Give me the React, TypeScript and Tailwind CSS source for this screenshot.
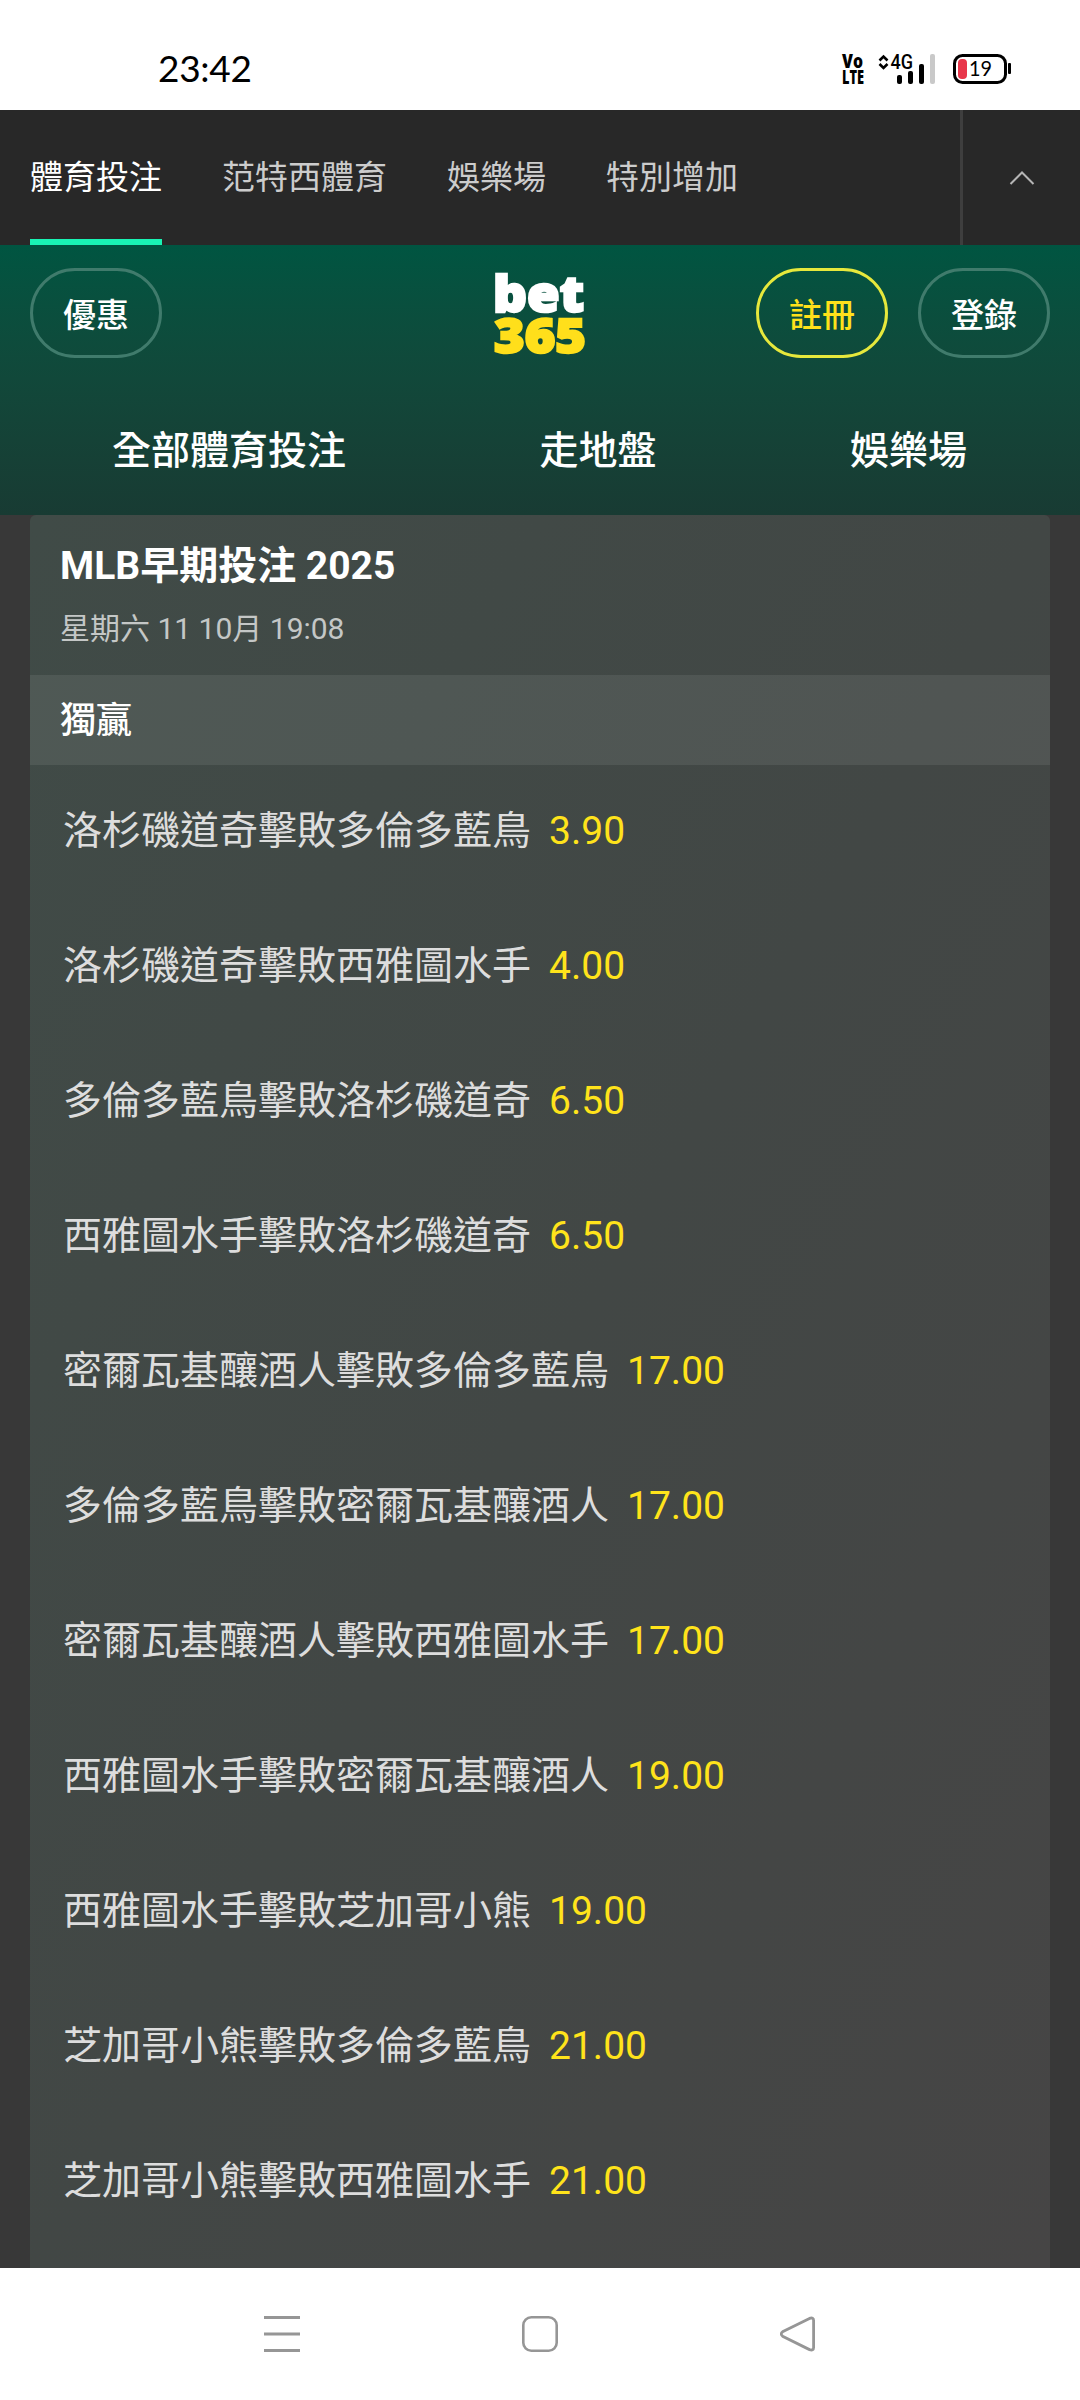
const tabs = ["體育投注", "范特西體育", "娛樂場", "特別增加"];

const sections = ["全部體育投注", "走地盤", "娛樂場"];

const selections = [
  { name: "洛杉磯道奇擊敗多倫多藍鳥", odds: "3.90" },
  { name: "洛杉磯道奇擊敗西雅圖水手", odds: "4.00" },
  { name: "多倫多藍鳥擊敗洛杉磯道奇", odds: "6.50" },
  { name: "西雅圖水手擊敗洛杉磯道奇", odds: "6.50" },
  { name: "密爾瓦基釀酒人擊敗多倫多藍鳥", odds: "17.00" },
  { name: "多倫多藍鳥擊敗密爾瓦基釀酒人", odds: "17.00" },
  { name: "密爾瓦基釀酒人擊敗西雅圖水手", odds: "17.00" },
  { name: "西雅圖水手擊敗密爾瓦基釀酒人", odds: "19.00" },
  { name: "西雅圖水手擊敗芝加哥小熊", odds: "19.00" },
  { name: "芝加哥小熊擊敗多倫多藍鳥", odds: "21.00" },
  { name: "芝加哥小熊擊敗西雅圖水手", odds: "21.00" },
];

function StatusBar() {
  return (
    <div className="flex h-[110px] shrink-0 items-start justify-between bg-white pr-[68px] pl-[158px] text-black">
      <span className="pt-[49px] font-['Lato',sans-serif] text-[37px] leading-none tracking-[-0.3px]">23:42</span>
      <svg width="172" height="70" viewBox="840 40 172 70" className="mt-[40px]">
        <g fontFamily="Open Sans, sans-serif" fontWeight="800" fontSize="19.5">
          <text x="842" y="68" textLength="21" lengthAdjust="spacingAndGlyphs">Vo</text>
          <text x="842" y="84" textLength="22" lengthAdjust="spacingAndGlyphs">LTE</text>
        </g>
        <path d="M879.5 60.5l4-4 4 4M879.5 64l4 4 4-4" fill="none" stroke="#000" strokeWidth="2.6" />
        <text x="890.5" y="68.5" fontFamily="Roboto, sans-serif" fontWeight="500" fontSize="20" textLength="22.5" lengthAdjust="spacingAndGlyphs">4G</text>
        <rect x="897" y="75" width="5" height="9" rx="2" />
        <rect x="908" y="71" width="5" height="13" rx="2" />
        <rect x="919" y="64" width="5" height="20" rx="2" />
        <rect x="930" y="54" width="5" height="30" rx="2" fill="#c9c9c9" />
        <rect x="954.5" y="55.5" width="51" height="27" rx="8" fill="none" stroke="#000" strokeWidth="3" />
        <rect x="958" y="59" width="9" height="20" rx="4" fill="#e8364a" />
        <text x="969" y="76" fontFamily="Lato, sans-serif" fontSize="20.5" textLength="23" lengthAdjust="spacingAndGlyphs">19</text>
        <rect x="1008" y="63" width="3" height="11" rx="1" />
      </svg>
    </div>
  );
}

function ProductTabs() {
  return (
    <div className="flex h-[135px] shrink-0 bg-[#282828]">
      <div className="flex flex-1 gap-[60px] pl-[30px]">
        {tabs.map((tab, i) => (
          <div
            key={tab}
            className={
              i === 0
                ? "flex items-center border-b-[6px] border-[#19f3b4] pt-[7px] text-[33px] text-white"
                : "flex items-center border-b-[6px] border-transparent pt-[7px] text-[33px] text-[#cccccc]"
            }
          >
            {tab}
          </div>
        ))}
      </div>
      <div className="flex w-[120px] items-center justify-center border-l-3 border-[#3e3e3e]">
        <svg width="26" height="16" viewBox="0 0 26 16" fill="none" stroke="#b5b5b5" strokeWidth="2">
          <path d="M1.5 14L13 2.5 24.5 14" />
        </svg>
      </div>
    </div>
  );
}

function Header() {
  return (
    <div className="h-[270px] shrink-0 bg-linear-to-b from-[#005541] to-[#183b33] font-medium text-white">
      <div className="flex h-[136px] items-center px-[30px]">
        <div className="flex flex-1">
          <button className="h-[90px] w-[132px] rounded-full border-3 border-[#407b6c] pt-[5px] text-[33px]">優惠</button>
        </div>
        <svg width="94" height="136" viewBox="0 -25 94 136" fontFamily="Open Sans, sans-serif" fontWeight="800" strokeWidth="2.4">
          <text x="0" y="41.5" fontSize="50" fill="#fff" stroke="#fff" textLength="91" lengthAdjust="spacingAndGlyphs">bet</text>
          <text x="1" y="83" fontSize="48.5" fill="#ffdf1b" stroke="#ffdf1b" textLength="92" lengthAdjust="spacingAndGlyphs">365</text>
        </svg>
        <div className="flex flex-1 justify-end gap-[30px]">
          <button className="h-[90px] w-[132px] rounded-full border-3 border-[#e6e83c] pt-[5px] text-[33px] text-[#ffe11b]">註冊</button>
          <button className="h-[90px] w-[132px] rounded-full border-3 border-[#407b6c] pt-[5px] text-[33px]">登錄</button>
        </div>
      </div>
      <div className="flex h-[134px] items-center justify-between pt-[6px] pr-[113px] pl-[112px] text-[39px]">
        {sections.map((section) => (
          <span key={section}>{section}</span>
        ))}
      </div>
    </div>
  );
}

function Market() {
  return (
    <div className="mx-[30px] flex-1 overflow-hidden rounded-t-[6px] bg-linear-to-br from-[#404b47] via-[#424745] to-[#464545]">
      <div className="flex h-[160px] flex-col pt-[28px] pl-[30px]">
        <h1 className="text-[39px] leading-[46px] font-bold text-white">MLB早期投注 2025</h1>
        <p className="mt-[22px] text-[30px] leading-[36px] text-[#c4c7c6]">星期六 11 10月 19:08</p>
      </div>
      <div className="flex h-[90px] items-center bg-white/8 pt-[2px] pl-[30px] text-[36px] font-medium text-white">獨贏</div>
      {selections.map((s) => (
        <div key={s.name} className="flex h-[135px] items-center gap-[18px] pb-[2px] pl-[33px] text-[39px]">
          <span className="text-[#dddddd]">{s.name}</span>
          <span className="text-[#ffe31b]">{s.odds}</span>
        </div>
      ))}
    </div>
  );
}

function NavigationBar() {
  return (
    <div className="flex h-[132px] shrink-0 items-center justify-between bg-white px-[264px]">
      <svg width="36" height="36" viewBox="0 0 36 36" fill="none" stroke="#969696" strokeWidth="3">
        <path d="M0 1.5H36M0 18H36M0 34.5H36" />
      </svg>
      <svg width="36" height="36" viewBox="0 0 36 36" fill="none" stroke="#969696" strokeWidth="2.6">
        <rect x="1.3" y="1.3" width="33.4" height="33.4" rx="8" />
      </svg>
      <svg width="36" height="36" viewBox="0 0 36 36" fill="none" stroke="#969696" strokeWidth="2.8">
        <path d="M29.5 2.4L2.6 15.8Q-.2 18 2.6 20.2L29.5 33.6Q33.6 35 33.6 31.5V4.5Q33.6 1 29.5 2.4Z" />
      </svg>
    </div>
  );
}

export default function App() {
  return (
    <div className="flex h-[2400px] w-[1080px] flex-col overflow-hidden bg-[#383838] font-['Roboto','Noto_Sans_CJK_TC',sans-serif]">
      <StatusBar />
      <ProductTabs />
      <Header />
      <Market />
      <NavigationBar />
    </div>
  );
}
